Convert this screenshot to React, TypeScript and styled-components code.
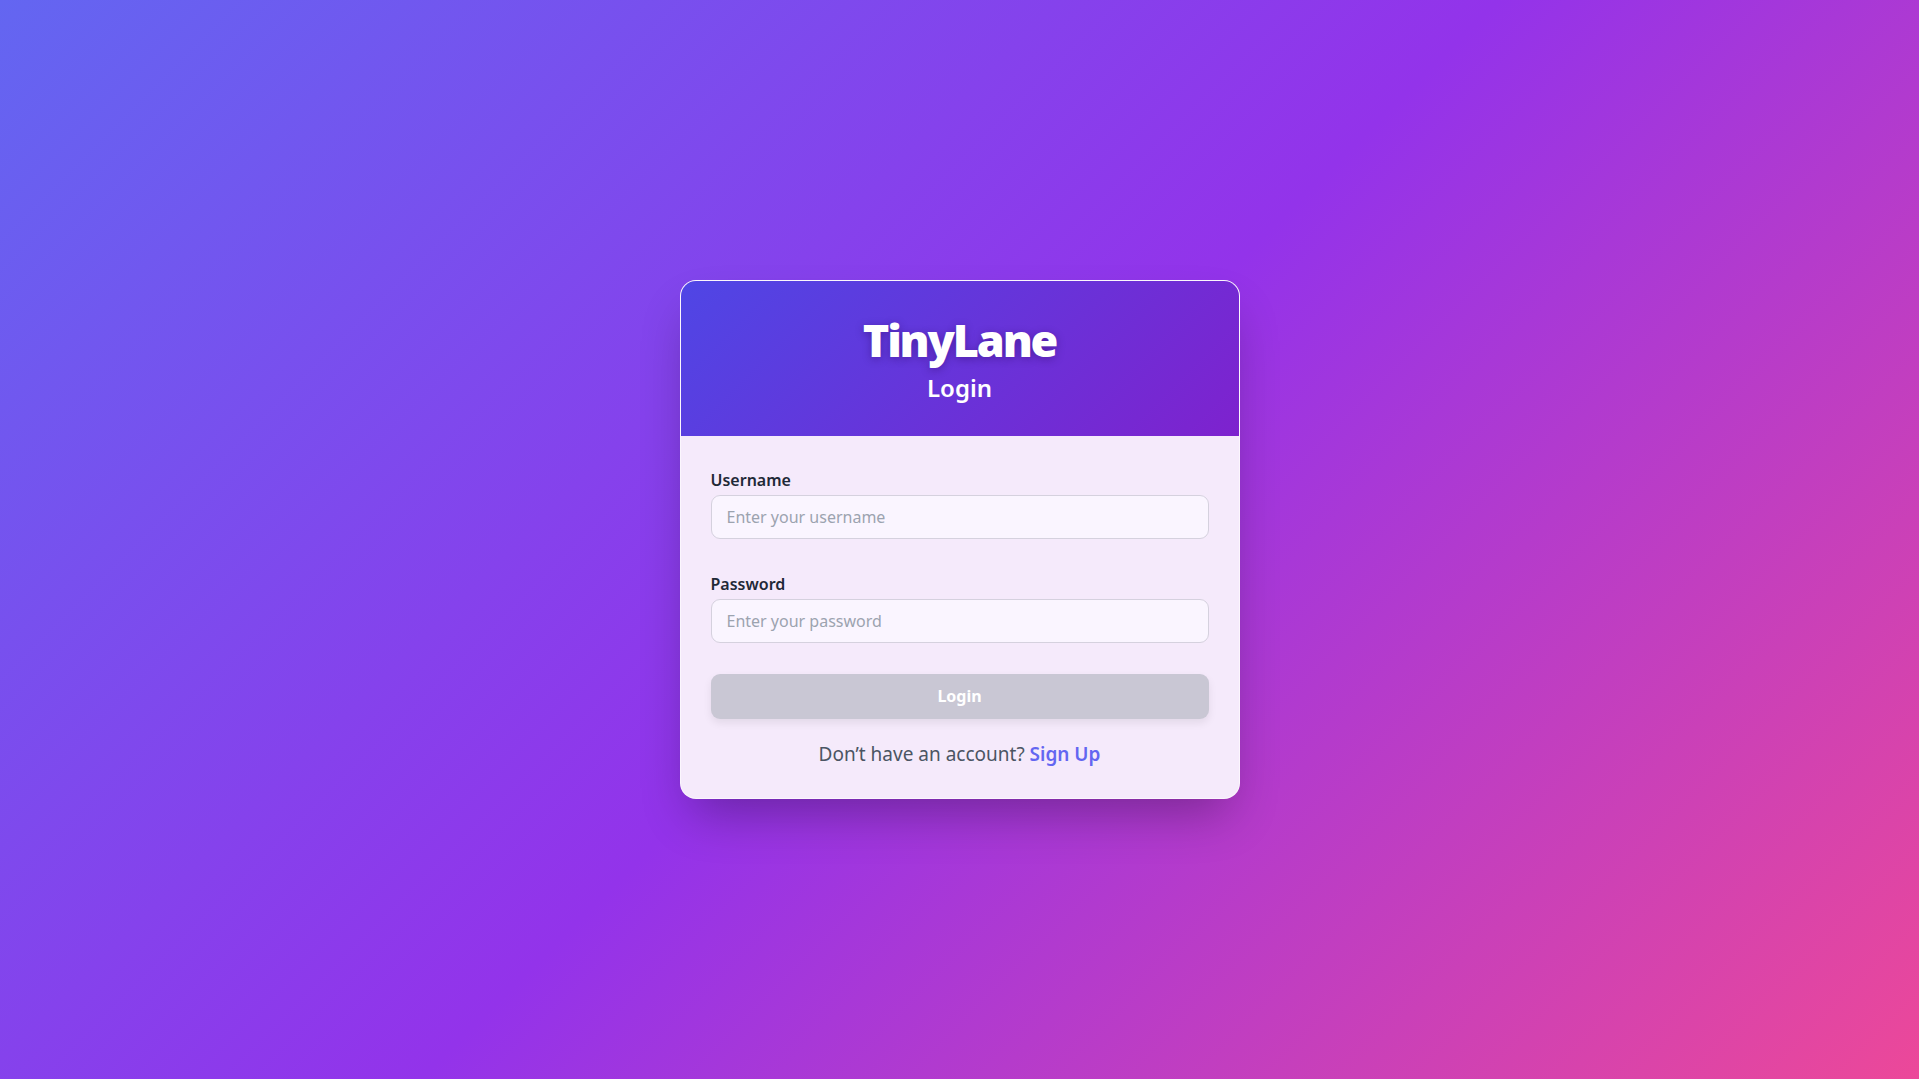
import React from "react";
import styled, { createGlobalStyle } from "styled-components";

const GlobalStyle = createGlobalStyle`
  * { box-sizing: border-box; }
  html, body { margin: 0; padding: 0; }
  body {
    font-family: "Noto Sans", "Open Sans", sans-serif;
    -webkit-font-smoothing: antialiased;
  }
`;

const Page = styled.div`
  min-height: 100vh;
  display: flex;
  align-items: center;
  justify-content: center;
  background: linear-gradient(135deg, #6366f1 0%, #9333ea 50%, #ec4899 100%);
`;

const Card = styled.div`
  width: 560px;
  border-radius: 16px;
  overflow: hidden;
  background: #f5eafb;
  border: 1px solid rgba(255, 255, 255, 0.55);
  box-shadow: 0 25px 50px -12px rgba(0, 0, 0, 0.3);
`;

const Header = styled.div`
  display: flex;
  flex-direction: column;
  align-items: center;
  padding: 32px 32px 30px;
  background: linear-gradient(135deg, #4f46e5 0%, #7e22ce 100%);
  color: #ffffff;
`;

const Title = styled.h1`
  margin: 0;
  font-size: 45px;
  line-height: 1.2;
  font-weight: 900;
  letter-spacing: -2.2px;
  text-shadow: 0 2px 8px rgba(40, 0, 90, 0.4);
`;

const Subtitle = styled.h2`
  margin: 3px 0 0;
  font-size: 24px;
  line-height: 1.5;
  font-weight: 600;
`;

const Body = styled.form`
  display: flex;
  flex-direction: column;
  padding: 32px 30px 30px;
`;

const Field = styled.div`
  display: flex;
  flex-direction: column;
  gap: 3px;
  margin-bottom: 33px;
`;

const Label = styled.label`
  font-size: 16px;
  line-height: 1.5;
  font-weight: 600;
  color: #1f2937;
`;

const Input = styled.input`
  height: 44px;
  padding: 0 15px;
  border: 1px solid #d5d1de;
  border-radius: 9px;
  background: #faf5ff;
  font-family: inherit;
  font-size: 16px;
  color: #1f2937;
  outline: none;
  &::placeholder { color: #9ca3af; }
`;

const Button = styled.button`
  height: 45px;
  margin-top: -2px;
  border: none;
  border-radius: 9px;
  background: #c9c7d4;
  color: #ffffff;
  font-family: inherit;
  font-size: 16px;
  font-weight: 700;
  box-shadow: 0 4px 8px rgba(0, 0, 0, 0.08);
  cursor: not-allowed;
`;

const Footer = styled.p`
  margin: 22px 0 0;
  text-align: center;
  font-size: 19px;
  line-height: 1.45;
  color: #4b5563;
`;

const Link = styled.a`
  color: #6366f1;
  font-weight: 600;
  text-decoration: none;
`;

export default function App() {
  return (
    <>
      <GlobalStyle />
      <Page>
        <Card>
          <Header>
            <Title>TinyLane</Title>
            <Subtitle>Login</Subtitle>
          </Header>
          <Body onSubmit={(e) => e.preventDefault()}>
            <Field>
              <Label htmlFor="username">Username</Label>
              <Input id="username" type="text" placeholder="Enter your username" />
            </Field>
            <Field>
              <Label htmlFor="password">Password</Label>
              <Input id="password" type="password" placeholder="Enter your password" />
            </Field>
            <Button type="submit" disabled>Login</Button>
            <Footer>
              Don’t have an account? <Link href="#">Sign Up</Link>
            </Footer>
          </Body>
        </Card>
      </Page>
    </>
  );
}
